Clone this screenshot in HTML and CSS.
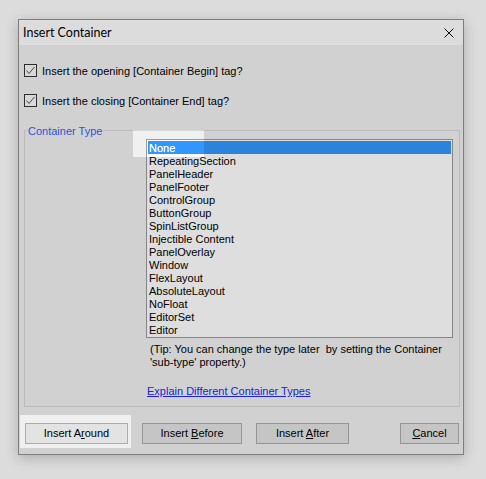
FILE: index.html
```html
<!DOCTYPE html>
<html>
<head>
<meta charset="utf-8">
<link rel="stylesheet" href="styles.css">
</head>
<body>
<div class="dialog">
  <div class="titlebar">
    <span class="title">Insert Container</span>
    <svg class="close" width="10" height="10" viewBox="0 0 10 10"><path d="M0.5 0.5 L9.5 9.5 M9.5 0.5 L0.5 9.5" stroke="#111" stroke-width="1" fill="none"/></svg>
  </div>
  <div class="content">
    <label class="check-row">
      <span class="checkbox"><svg width="11" height="11" viewBox="0 0 11 11"><path d="M1.5 5.5 L4 8.5 L9.5 2" stroke="#4a4a4a" stroke-width="1" fill="none"/></svg></span>
      <span class="check-text">Insert the opening [Container Begin] tag?</span>
    </label>
    <label class="check-row second">
      <span class="checkbox"><svg width="11" height="11" viewBox="0 0 11 11"><path d="M1.5 5.5 L4 8.5 L9.5 2" stroke="#4a4a4a" stroke-width="1" fill="none"/></svg></span>
      <span class="check-text">Insert the closing [Container End] tag?</span>
    </label>
    <div class="group">
      <span class="group-label">Container Type</span>
      <div class="listbox">
        <div class="item selected">None</div>
        <div class="item">RepeatingSection</div>
        <div class="item">PanelHeader</div>
        <div class="item">PanelFooter</div>
        <div class="item">ControlGroup</div>
        <div class="item">ButtonGroup</div>
        <div class="item">SpinListGroup</div>
        <div class="item">Injectible Content</div>
        <div class="item">PanelOverlay</div>
        <div class="item">Window</div>
        <div class="item">FlexLayout</div>
        <div class="item">AbsoluteLayout</div>
        <div class="item">NoFloat</div>
        <div class="item">EditorSet</div>
        <div class="item">Editor</div>
      </div>
      <div class="tip">(Tip: You can change the type later&nbsp; by setting the Container<br>'sub-type' property.)</div>
      <a class="link" href="#">Explain Different Container Types</a>
    </div>
    <div class="buttons">
      <button class="btn b1">Insert A<u>r</u>ound</button>
      <button class="btn b2">Insert <u>B</u>efore</button>
      <button class="btn b3">Insert <u>A</u>fter</button>
      <button class="btn b4"><u>C</u>ancel</button>
    </div>
  </div>
</div>
<div class="spot spot-list"></div>
<div class="spot spot-btn"></div>
</body>
</html>
```
FILE: styles.css
```css
html, body {
  margin: 0;
  padding: 0;
}
body {
  width: 486px;
  height: 479px;
  overflow: hidden;
  background: #dcdcdc;
  font-family: "Liberation Sans", Arial, sans-serif;
  font-size: 11px;
  color: #000;
  position: relative;
}
.dialog {
  margin: 19px 0 0 18px;
  width: 446px;
  height: 436px;
  box-sizing: border-box;
  border: 1px solid #7e7e7e;
  background: #d1d1d1;
  box-shadow: 0 3px 12px rgba(0,0,0,0.22);
  display: flex;
  flex-direction: column;
}
.titlebar {
  height: 25px;
  flex: none;
  background: #dcdcdc;
  display: flex;
  align-items: center;
  justify-content: space-between;
  padding: 0 9px 0 4px;
}
.title {
  font-family: Lato, "Noto Sans", sans-serif;
  font-size: 12.5px;
  color: #000;
}
.close {
  display: block;
}
.content {
  padding: 19px 3px 0 5px;
}
.check-row {
  display: flex;
  align-items: center;
  gap: 5px;
  height: 13px;
  line-height: 13px;
}
.check-text {
  padding-top: 2px;
}
.check-row.second {
  margin-top: 17px;
}
.checkbox {
  width: 13px;
  height: 13px;
  box-sizing: border-box;
  border: 1px solid #2e2e2e;
  background: #d8d8d8;
  display: flex;
  align-items: center;
  justify-content: center;
}
.checkbox svg {
  display: block;
}
.group {
  margin-top: 23px;
  height: 277px;
  box-sizing: border-box;
  border: 1px solid #bcbcbc;
  position: relative;
}
.group-label {
  position: absolute;
  top: -7px;
  left: 2px;
  padding: 0 1px;
  background: #d1d1d1;
  color: #2d55d6;
  line-height: 14px;
}
.listbox {
  margin: 8px 0 0 121px;
  width: 307px;
  height: 199px;
  box-sizing: border-box;
  border: 1px solid #858585;
  padding: 1px;
  background: #dedede;
}
.item {
  height: 12px;
  padding-top: 1px;
  line-height: 13px;
  padding-left: 1px;
  white-space: nowrap;
  overflow: visible;
}
.item.selected {
  background: #2b83dc;
  color: #fff;
}
.tip {
  margin: 5px 0 0 125px;
  line-height: 13px;
}
.link {
  display: inline-block;
  margin: 16px 0 0 122px;
  color: #1a22dd;
  text-decoration: underline;
  line-height: 13px;
}
.buttons {
  display: flex;
  margin-top: 16px;
  padding-left: 1px;
}
.btn {
  height: 21px;
  box-sizing: border-box;
  border: 1px solid #959595;
  background: #c5c5c5;
  font-family: "Liberation Sans", Arial, sans-serif;
  font-size: 11px;
  color: #000;
  padding: 0;
  margin: 0;
  line-height: 19px;
}
.btn u {
  text-underline-offset: 1px;
}
.b1 { width: 103px; }
.b2 { width: 100px; margin-left: 14px; }
.b3 { width: 93px; margin-left: 14px; }
.b4 { width: 59px; margin-left: 51px; }
.spot {
  position: absolute;
  backdrop-filter: brightness(1.15);
}
.spot-list {
  left: 133px;
  top: 130px;
  width: 72px;
  height: 27px;
}
.spot-btn {
  left: 20px;
  top: 415px;
  width: 112px;
  height: 33px;
}
```
